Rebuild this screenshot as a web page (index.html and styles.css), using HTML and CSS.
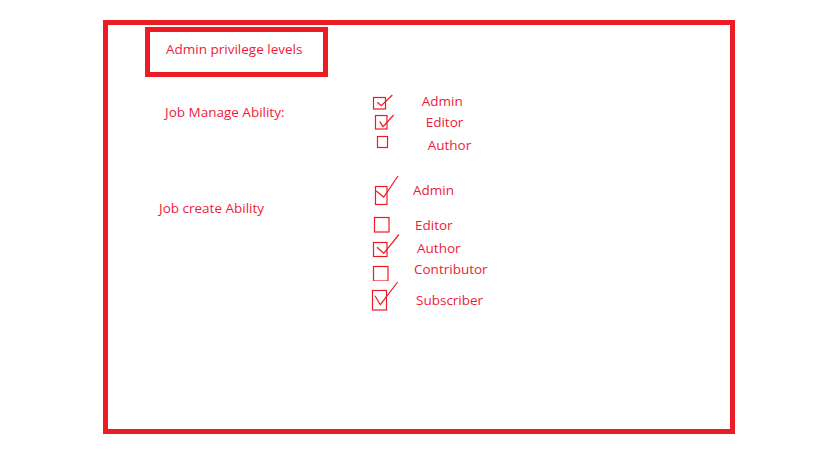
FILE: index.html
```html
<!DOCTYPE html>
<html lang="en">
<head>
<meta charset="utf-8">
<title>Admin privilege levels</title>
<link rel="stylesheet" href="styles.css">
</head>
<body>
<div class="frame">
  <div class="title-box"><span class="title">Admin privilege levels</span></div>

  <div class="group group-manage">
    <div class="group-label">Job Manage Ability:</div>
    <div class="options">
      <div class="opt r-m1">
        <svg class="cb" width="32" height="22" viewBox="0 0 32 22"><rect x="3.5" y="7.5" width="12" height="11.5"/><polyline points="7.3,12.3 11.3,15.7 22.3,5"/></svg>
        <span class="opt-label">Admin</span>
      </div>
      <div class="opt r-m2">
        <svg class="cb" width="32" height="21" viewBox="0 0 32 21"><rect x="5.5" y="3.5" width="11.5" height="13.5"/><polyline points="9.7,9.7 13,14.7 23.7,3"/></svg>
        <span class="opt-label">Editor</span>
      </div>
      <div class="opt r-m3">
        <svg class="cb" width="32" height="20" viewBox="0 0 32 20"><rect x="7.5" y="3.5" width="10" height="11"/></svg>
        <span class="opt-label">Author</span>
      </div>
    </div>
  </div>

  <div class="group group-create">
    <div class="group-label">Job create Ability</div>
    <div class="options">
      <div class="opt r-c1">
        <svg class="cb" width="32" height="36" viewBox="0 0 32 36"><rect x="5.5" y="12.5" width="11.5" height="18"/><polyline points="6.3,17 13.7,23 28,2"/></svg>
        <span class="opt-label">Admin</span>
      </div>
      <div class="opt r-c2">
        <svg class="cb" width="32" height="24" viewBox="0 0 32 24"><rect x="4.5" y="7.5" width="14.5" height="14.5"/></svg>
        <span class="opt-label">Editor</span>
      </div>
      <div class="opt r-c3">
        <svg class="cb" width="32" height="25" viewBox="0 0 32 25"><rect x="3.5" y="8.5" width="13.5" height="14"/><polyline points="7,13.3 13.7,19.3 29,0.5"/></svg>
        <span class="opt-label">Author</span>
      </div>
      <div class="opt r-c4">
        <svg class="cb" width="32" height="22" viewBox="0 0 32 22"><rect x="3.5" y="7.5" width="14.5" height="14.5"/></svg>
        <span class="opt-label">Contributor</span>
      </div>
      <div class="opt r-c5">
        <svg class="cb" width="32" height="32" viewBox="0 0 32 32"><rect x="2.5" y="9.5" width="14" height="19.5"/><polyline points="5,14.7 10.3,23.7 27.7,1"/></svg>
        <span class="opt-label">Subscriber</span>
      </div>
    </div>
  </div>
</div>
</body>
</html>
```

FILE: styles.css
```css
html, body {
  margin: 0;
  padding: 0;
  background: #ffffff;
}

body {
  font-family: "Open Sans", "Noto Sans", "DejaVu Sans", sans-serif;
  font-size: 13.5px;
  line-height: 17px;
  color: #ed1c3a;
}

.frame {
  box-sizing: border-box;
  margin: 20px 0 0 103px;
  width: 632px;
  height: 414px;
  border: 5px solid #ed1c24;
  display: flex;
  flex-direction: column;
}

.title-box {
  box-sizing: border-box;
  margin: 2px 0 0 37px;
  width: 183px;
  height: 50px;
  border: 5px solid #ed1c24;
  padding: 9px 0 0 16px;
  white-space: nowrap;
}

.group {
  display: flex;
  align-items: flex-start;
}

.group-manage {
  margin-top: 13px;
}

.group-create {
  margin-top: 21px;
}

.group-label {
  box-sizing: border-box;
  width: 262px;
  white-space: nowrap;
}

.group-manage .group-label {
  padding: 13.6px 0 0 57px;
}

.group-create .group-label {
  padding: 25.6px 0 0 51px;
}

.options {
  display: flex;
  flex-direction: column;
}

.opt {
  display: flex;
  align-items: flex-start;
}

.cb {
  display: block;
  flex: none;
  fill: none;
  stroke: #ed1c24;
  stroke-width: 1.2;
}

.opt-label {
  white-space: nowrap;
}

.r-m1 { height: 22px; }
.r-m2 { height: 21px; }
.r-m3 { height: 20px; }
.r-c1 { height: 36px; }
.r-c2 { height: 24px; }
.r-c3 { height: 25px; }
.r-c4 { height: 22px; }
.r-c5 { height: 32px; }

.r-m1 .opt-label { margin: 3.3px 0 0 19.7px; }
.r-m2 .opt-label { margin: 1.9px 0 0 23.7px; }
.r-m3 .opt-label { margin: 3.6px 0 0 25.7px; }

.r-c1 .opt-label { margin: 8.3px 0 0 11px; }
.r-c2 .opt-label { margin: 7.3px 0 0 13px; }
.r-c3 .opt-label { margin: 5.6px 0 0 15px; }
.r-c4 .opt-label { margin: 1.6px 0 0 12px; }
.r-c5 .opt-label { margin: 10.6px 0 0 14px; }
```
